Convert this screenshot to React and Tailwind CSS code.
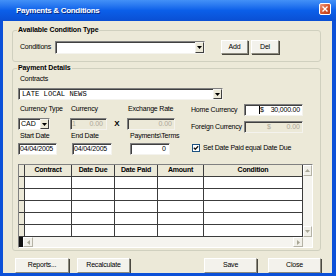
import React from 'react';

// Classic sunken edit box
const Field = ({ className = '', disabled = false, children }) => (
  <div
    className={`h-full flex items-center border border-t-[#808080] border-l-[#808080] border-r-[#f4f3ee] border-b-[#f4f3ee] shadow-[inset_1px_1px_0_#404040] ${
      disabled ? 'bg-[#ece9d8] text-[#aca899]' : 'bg-white text-black'
    } ${className}`}
  >
    {children}
  </div>
);

const DropArrow = () => (
  <div className="w-[9px] h-full flex items-center justify-center bg-[#ece9d8] border border-t-[#f4f3ee] border-l-[#f4f3ee] border-r-[#404040] border-b-[#404040]">
    <svg width="5" height="3" viewBox="0 0 5 3">
      <path d="M0 0h5L2.5 3z" fill="#000" />
    </svg>
  </div>
);

const Combo = ({ className = '', textClass = '', children }) => (
  <Field className={className}>
    <div className={`flex-1 overflow-hidden whitespace-nowrap pl-[2px] ${textClass}`}>{children}</div>
    <DropArrow />
  </Field>
);

const Button = ({ className = '', children }) => (
  <div
    className={`flex items-center justify-center bg-[#f3f2ec] border border-t-white border-l-white border-r-[#8c8a7e] border-b-[#8c8a7e] shadow-[1px_1px_0_#4a4840] text-[7px] tracking-[-0.2px] ${className}`}
  >
    {children}
  </div>
);

const Label = ({ className = '', children }) => (
  <div className={`text-[7px] leading-[10px] tracking-[-0.2px] whitespace-nowrap ${className}`}>{children}</div>
);

const ScrollBtn = ({ dir, className = '' }) => {
  const paths = {
    up: 'M0 3L2.5 0L5 3z',
    down: 'M0 0h5L2.5 3z',
    left: 'M3 0v5L0 2.5z',
    right: 'M0 0v5L3 2.5z',
  };
  const vertical = dir === 'up' || dir === 'down';
  return (
    <div
      className={`flex items-center justify-center bg-[#f1f0e9] border border-t-white border-l-white border-r-[#b5b3a6] border-b-[#b5b3a6] ${className}`}
    >
      <svg width={vertical ? 5 : 3} height={vertical ? 3 : 5} viewBox={vertical ? '0 0 5 3' : '0 0 3 5'}>
        <path d={paths[dir]} fill="#a8a696" />
      </svg>
    </div>
  );
};

const columns = [
  { title: '', w: 'w-[6px]', head: 'bg-[#ece9d8]', cell: 'bg-[#ece9d8]' },
  { title: 'Contract', w: 'w-[47px]', head: 'bg-[#ece9d8]', cell: 'bg-white' },
  { title: 'Date Due', w: 'w-[43px]', head: 'bg-[#ece9d8]', cell: 'bg-white' },
  { title: 'Date Paid', w: 'w-[43px]', head: 'bg-[#ece9d8]', cell: 'bg-white' },
  { title: 'Amount', w: 'w-[46px]', head: 'bg-[#ece9d8]', cell: 'bg-white' },
  { title: 'Condition', w: 'w-[99px]', head: 'bg-[#ece9d8]', cell: 'bg-white' },
];

const PaymentGrid = () => (
  <div className="mt-[9px] w-[295px] h-[84px] flex flex-col border border-t-[#808080] border-l-[#808080] border-r-white border-b-white">
    <div className="h-[72px] flex">
      <div className="w-[284px] flex flex-col">
        <div className="h-[12px] flex">
          {columns.map((c, i) => (
            <div
              key={i}
              className={`${c.w} ${c.head} h-full border-r border-b border-[#3c3c3c] flex items-center justify-center text-[7px] font-bold tracking-[-0.2px] whitespace-nowrap`}
            >
              {c.title}
            </div>
          ))}
        </div>
        {[0, 1, 2, 3, 4].map((r) => (
          <div key={r} className="h-[12px] flex">
            {columns.map((c, i) => (
              <div key={i} className={`${c.w} ${c.cell} h-full border-r border-b border-[#3c3c3c]`} />
            ))}
          </div>
        ))}
      </div>
      <div className="w-[9px] flex flex-col bg-[#f5f4ef]">
        <ScrollBtn dir="up" className="h-[11px]" />
        <div className="flex-1" />
        <ScrollBtn dir="down" className="h-[11px]" />
      </div>
    </div>
    <div className="h-[10px] flex bg-[#f5f4ef]">
      <div className="w-[4px] bg-[#111]" />
      <ScrollBtn dir="left" className="w-[10px]" />
      <div className="flex-1" />
      <ScrollBtn dir="right" className="w-[10px]" />
      <div className="w-[9px] bg-[#f7f6f1]" />
    </div>
  </div>
);

const GroupBox = ({ title, children }) => (
  <fieldset className="ml-[9px] w-[309px] border border-[#d0d0bf] rounded-[3px]">
    <legend className="ml-[4px] px-[1px] text-[7px] leading-[12px] font-bold tracking-[-0.1px] whitespace-nowrap">
      {title}
    </legend>
    {children}
  </fieldset>
);

export default function App() {
  return (
    <div className="w-[336px] h-[276px] flex flex-col bg-[#0b50d8] font-['Liberation_Sans',Arial,sans-serif] text-black overflow-hidden">
      {/* title bar */}
      <div className="h-[21px] shrink-0 flex items-start pl-[16px] pr-[5px] bg-gradient-to-b from-[#4391f7] via-[#0b5fe9] to-[#0a4fd3]">
        <span className="flex-1 pt-[6px] text-white font-bold text-[8px] leading-[10px] tracking-[-0.3px] [text-shadow:1px_1px_0_#0a2a80]">
          Payments &amp; Conditions
        </span>
        <div className="mt-[3px] w-[12px] h-[12px] rounded-[2px] border border-white bg-gradient-to-br from-[#ec9a7e] via-[#d9582f] to-[#b93a14] flex items-center justify-center">
          <svg width="6" height="6" viewBox="0 0 6 6">
            <path d="M0.5 0.5L5.5 5.5M5.5 0.5L0.5 5.5" stroke="#fff" strokeWidth="1.4" />
          </svg>
        </div>
      </div>

      {/* dialog body */}
      <div className="flex-1 ml-[3px] mr-[4px] mb-[3px] bg-[#ece9d8] flex flex-col overflow-hidden">
        <div className="mt-[3px]">
          <GroupBox title="Available Condition Type">
            <div className="pt-[4px] pb-[7px] pl-[7px] flex items-center">
              <Label className="w-[35px]">Conditions</Label>
              <Combo className="w-[150px] !h-[13px]" />
              <Button className="ml-[16px] w-[27px] h-[14px]">Add</Button>
              <Button className="ml-[3px] w-[28px] h-[14px]">Del</Button>
            </div>
          </GroupBox>
        </div>

        <GroupBox title="Payment Details">
          <div className="pl-[5px] pb-[2px] flex flex-col">
            <div className="h-[13px] pl-[2px]">
              <Label>Contracts</Label>
            </div>
            <div className="mt-[1px] h-[12px]">
              <Combo
                className="w-[205px]"
                textClass="font-['Liberation_Mono',monospace] text-[7.2px] leading-[10px] pl-[3px]"
              >
                LATE LOCAL NEWS
              </Combo>
            </div>

            <div className="flex items-start">
              {/* left block */}
              <div className="w-[173px] pt-[4px] flex flex-col">
                <div className="h-[10px] flex">
                  <Label className="w-[52px] pl-[2px]">Currency Type</Label>
                  <Label className="w-[57px] pl-[1px]">Currency</Label>
                  <Label className="pl-[1px]">Exchange Rate</Label>
                </div>
                <div className="mt-[4px] h-[12px] flex">
                  <div className="w-[52px] h-full">
                    <Combo className="w-[32px]" textClass="text-[7px] leading-[10px]">
                      CAD
                    </Combo>
                  </div>
                  <div className="w-[57px] h-full flex">
                    <Field disabled className="w-[37px] text-[7px] px-[1px] justify-between">
                      <span>1</span>
                      <span className="pr-[2px]">0.00</span>
                    </Field>
                    <div className="flex-1 flex items-center justify-center text-[8px] font-bold">X</div>
                  </div>
                  <Field disabled className="w-[48px] text-[7px] justify-end pr-[2px]">
                    <span>0.00</span>
                  </Field>
                </div>
                <div className="mt-[1px] h-[10px] flex">
                  <Label className="w-[52px] pl-[2px]">Start Date</Label>
                  <Label className="w-[60px] pl-[1px]">End Date</Label>
                  <Label>Payments\Terms</Label>
                </div>
                <div className="mt-[2px] h-[12px] flex">
                  <div className="w-[52px] h-full">
                    <Field className="w-[39px] text-[7px] tracking-[-0.2px] pl-[1px]">04/04/2005</Field>
                  </div>
                  <div className="w-[60px] h-full pl-[2px]">
                    <Field className="w-[40px] text-[7px] tracking-[-0.2px] pl-[1px]">04/04/2005</Field>
                  </div>
                  <Field className="w-[40px] text-[7px] justify-end pr-[3px]">0</Field>
                </div>
              </div>

              {/* right block */}
              <div className="pt-[4px] flex flex-col">
                <div className="h-[12px] flex items-center">
                  <Label className="w-[53px]">Home Currency</Label>
                  <Field className="w-[59px] text-[7px] tracking-[-0.2px]">
                    <span className="ml-[14px] w-[1px] h-[8px] bg-black" />
                    <span>$</span>
                    <span className="ml-auto pr-[2px]">30,000.00</span>
                  </Field>
                </div>
                <div className="mt-[5px] h-[12px] flex items-center">
                  <Label className="w-[53px]">Foreign Currency</Label>
                  <Field disabled className="w-[59px] text-[7px]">
                    <span className="ml-[22px]">$</span>
                    <span className="ml-auto pr-[2px]">0.00</span>
                  </Field>
                </div>
                <div className="mt-[10px] h-[10px] flex items-center pl-[1px]">
                  <div className="w-[8px] h-[8px] bg-white border border-[#1c5180] flex items-center justify-center">
                    <svg width="6" height="6" viewBox="0 0 6 6">
                      <path d="M0.8 2.8L2.3 4.3L5.2 1.2" stroke="#1a1a1a" strokeWidth="1.3" fill="none" />
                    </svg>
                  </div>
                  <Label className="ml-[3px]">Set Date Paid equal Date Due</Label>
                </div>
              </div>
            </div>

            <PaymentGrid />
          </div>
        </GroupBox>

        {/* bottom buttons */}
        <div className="mt-[7px] h-[15px] flex">
          <Button className="ml-[12px] w-[54px] h-full">Reports...</Button>
          <Button className="ml-[8px] w-[53px] h-full">Recalculate</Button>
          <div className="flex-1" />
          <Button className="w-[53px] h-full">Save</Button>
          <Button className="ml-[11px] mr-[11px] w-[53px] h-full">Close</Button>
        </div>
      </div>
    </div>
  );
}
